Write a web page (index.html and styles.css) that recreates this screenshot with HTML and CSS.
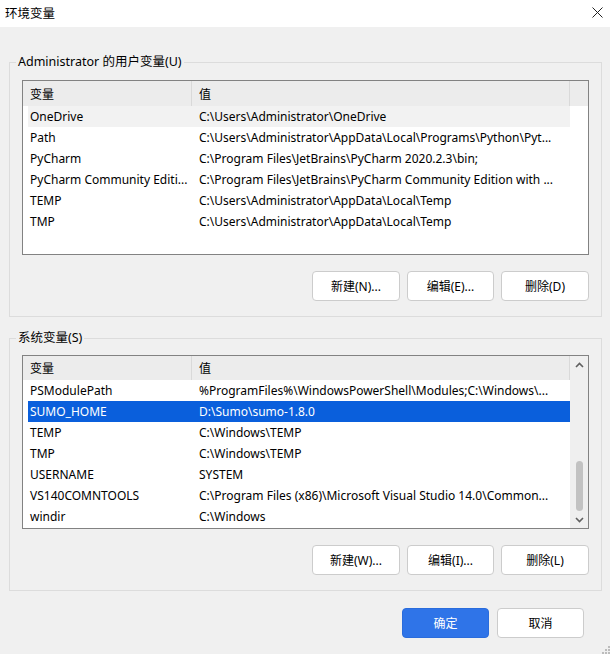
FILE: index.html
```html
<!DOCTYPE html>
<html lang="zh-CN">
<head>
  <meta charset="UTF-8" />
  <meta name="viewport" content="width=device-width, initial-scale=1.0" />
  <title>环境变量</title>
  <link rel="stylesheet" href="styles.css">
</head>
<body>
  <div class="window">
    <div class="titlebar">
      <span class="title">环境变量</span>
      <span class="close">
        <svg width="11" height="11" viewBox="0 0 11 11"><path d="M0.5 0.5 L10.5 10.5 M10.5 0.5 L0.5 10.5" stroke="#222" stroke-width="1" fill="none"/></svg>
      </span>
    </div>

    <fieldset class="group group-user">
      <legend>Administrator 的用户变量(U)</legend>
      <div class="list">
        <div class="list-main">
          <div class="list-head"><div class="hcell name">变量</div><div class="hcell value">值</div></div>
          <div class="row hover"><div class="cell name">OneDrive</div><div class="cell value">C:\Users\Administrator\OneDrive</div></div>
          <div class="row"><div class="cell name">Path</div><div class="cell value">C:\Users\Administrator\AppData\Local\Programs\Python\Pyt...</div></div>
          <div class="row"><div class="cell name">PyCharm</div><div class="cell value">C:\Program Files\JetBrains\PyCharm 2020.2.3\bin;</div></div>
          <div class="row"><div class="cell name">PyCharm Community Editi...</div><div class="cell value">C:\Program Files\JetBrains\PyCharm Community Edition with ...</div></div>
          <div class="row"><div class="cell name">TEMP</div><div class="cell value">C:\Users\Administrator\AppData\Local\Temp</div></div>
          <div class="row"><div class="cell name">TMP</div><div class="cell value">C:\Users\Administrator\AppData\Local\Temp</div></div>
        </div>
        <div class="list-side"><div class="side-head"></div></div>
      </div>
      <div class="buttons">
        <button class="btn">新建(N)...</button>
        <button class="btn">编辑(E)...</button>
        <button class="btn">删除(D)</button>
      </div>
    </fieldset>

    <fieldset class="group group-system">
      <legend>系统变量(S)</legend>
      <div class="list">
        <div class="list-main">
          <div class="list-head short"><div class="hcell name">变量</div><div class="hcell value">值</div></div>
          <div class="row"><div class="cell name">PSModulePath</div><div class="cell value">%ProgramFiles%\WindowsPowerShell\Modules;C:\Windows\...</div></div>
          <div class="row selected"><div class="cell name">SUMO_HOME</div><div class="cell value">D:\Sumo\sumo-1.8.0</div></div>
          <div class="row"><div class="cell name">TEMP</div><div class="cell value">C:\Windows\TEMP</div></div>
          <div class="row"><div class="cell name">TMP</div><div class="cell value">C:\Windows\TEMP</div></div>
          <div class="row"><div class="cell name">USERNAME</div><div class="cell value">SYSTEM</div></div>
          <div class="row"><div class="cell name">VS140COMNTOOLS</div><div class="cell value">C:\Program Files (x86)\Microsoft Visual Studio 14.0\Common...</div></div>
          <div class="row"><div class="cell name">windir</div><div class="cell value">C:\Windows</div></div>
        </div>
        <div class="scrollbar">
          <div class="arrow">
            <svg width="9" height="6" viewBox="0 0 9 6"><path d="M1 5 L4.5 1.5 L8 5" stroke="#606060" stroke-width="1.6" fill="none"/></svg>
          </div>
          <div class="track"><div class="thumb"></div></div>
          <div class="arrow">
            <svg width="9" height="6" viewBox="0 0 9 6"><path d="M1 1 L4.5 4.5 L8 1" stroke="#606060" stroke-width="1.6" fill="none"/></svg>
          </div>
        </div>
      </div>
      <div class="buttons">
        <button class="btn">新建(W)...</button>
        <button class="btn">编辑(I)...</button>
        <button class="btn">删除(L)</button>
      </div>
    </fieldset>

    <div class="footer">
      <button class="btn primary">确定</button>
      <button class="btn">取消</button>
    </div>
    <div class="grip">
      <svg width="9" height="8" viewBox="0 0 9 8">
        <rect x="7" y="0" width="2" height="2" fill="#bcbcbc"/>
        <rect x="4" y="3" width="2" height="2" fill="#bcbcbc"/>
        <rect x="7" y="3" width="2" height="2" fill="#bcbcbc"/>
        <rect x="1" y="6" width="2" height="2" fill="#bcbcbc"/>
        <rect x="4" y="6" width="2" height="2" fill="#bcbcbc"/>
        <rect x="7" y="6" width="2" height="2" fill="#bcbcbc"/>
      </svg>
    </div>
  </div>
</body>
</html>
```

FILE: styles.css
```css
body {
  margin: 0;
  background: #f0f0f0;
  font-family: "Noto Sans", "Noto Sans CJK SC", sans-serif;
  font-size: 12px;
  color: #000;
}
.window {
  position: relative;
  width: 610px;
  height: 654px;
  overflow: hidden;
}
.titlebar {
  height: 27px;
  background: #fff;
  display: flex;
  align-items: center;
  justify-content: space-between;
  padding: 0 7px 2px 5px;
  box-sizing: border-box;
}
.title {
  font-size: 12.5px;
}
.close {
  display: flex;
}
.group {
  margin: 0 0 0 9px;
  width: 592px;
  box-sizing: border-box;
  border: 1px solid #dcdcdc;
  padding: 10px 12px 15px 12px;
}
.group-user {
  margin-top: 27px;
}
.group-system {
  margin-top: 13px;
  padding-top: 9px;
}
.group legend {
  padding: 0 2px;
  margin-left: -6px;
  line-height: 16px;
  font-size: 12.5px;
}
.list {
  display: flex;
  border: 1px solid #828282;
  background: #fff;
  height: 175px;
  box-sizing: border-box;
}
.group-system .list {
  height: 174px;
}
.list-main {
  width: 547px;
  overflow: hidden;
}
.list-head {
  display: flex;
  height: 25px;
  background: #ececec;
}
.list-head.short {
  height: 24px;
}
.hcell {
  display: flex;
  align-items: center;
  padding-left: 7px;
  border-right: 1px solid #d9d9d9;
  box-sizing: border-box;
}
.hcell.name {
  width: 169px;
}
.hcell.value {
  flex: 1;
}
.row {
  display: flex;
  height: 21px;
  margin-left: 5px;
  align-items: center;
}
.row.hover {
  background: #f2f2f2;
}
.row.selected {
  background: #0a5fdc;
  color: #fff;
}
.cell {
  white-space: nowrap;
  overflow: hidden;
  padding-left: 2px;
  box-sizing: border-box;
}
.cell.name {
  width: 164px;
}
.cell.value {
  flex: 1;
  padding-left: 7px;
}
.list-side {
  width: 18px;
}
.side-head {
  height: 25px;
  background: #ececec;
}
.scrollbar {
  width: 18px;
  background: #efefef;
  display: flex;
  flex-direction: column;
}
.arrow {
  height: 17px;
  display: flex;
  align-items: center;
  justify-content: center;
}
.track {
  flex: 1;
  display: flex;
  flex-direction: column;
  justify-content: flex-end;
  align-items: center;
  padding-bottom: 0;
}
.thumb {
  width: 7px;
  height: 50px;
  border-radius: 4px;
  background: #c2c2c2;
}
.buttons {
  display: flex;
  justify-content: flex-end;
  gap: 7px;
  margin-top: 16px;
}
.btn {
  width: 88px;
  height: 30px;
  background: #fff;
  border: 1px solid #cccccc;
  border-radius: 4px;
  font-family: "Noto Sans", "Noto Sans CJK SC", sans-serif;
  font-size: 12px;
  color: #000;
  padding: 0;
}
.buttons .btn:nth-child(2) {
  width: 87px;
}
.footer {
  display: flex;
  justify-content: flex-end;
  gap: 8px;
  padding: 17px 26px 0 0;
}
.footer .btn {
  width: 87px;
}
.btn.primary {
  background: #2f74e8;
  border-color: #2a6cdc;
  color: #fff;
}
.grip {
  position: absolute;
  right: 0;
  bottom: 0;
  display: flex;
}
```
